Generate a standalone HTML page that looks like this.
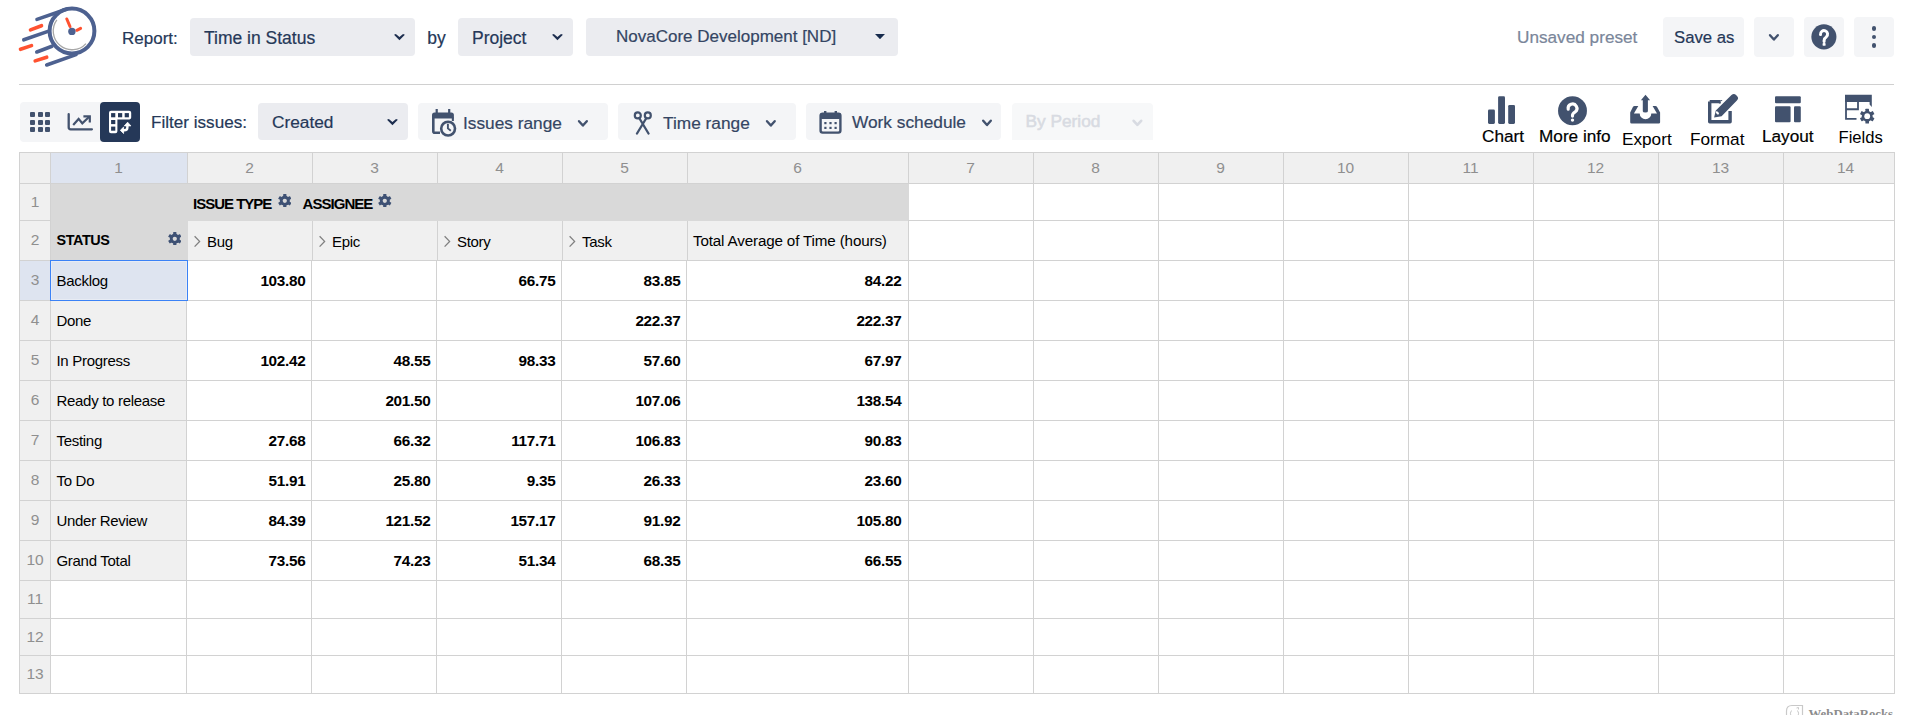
<!DOCTYPE html><html><head><meta charset='utf-8'><style>
*{box-sizing:border-box;margin:0;padding:0}
html,body{width:1913px;height:715px;overflow:hidden;background:#fff}
body{position:relative;font-family:"Liberation Sans",sans-serif;color:#253858}
.a{position:absolute}
.t{position:absolute;white-space:nowrap;line-height:1}
.tb{-webkit-text-stroke:0.2px currentColor}
.sel{position:absolute;background:#ebecf0;border-radius:4px}
.btn{position:absolute;background:#f4f5f7;border-radius:4px}
.g{position:absolute;background:#d2d2d2}
.gt{position:absolute;white-space:nowrap;line-height:1;font-size:14.5px;color:#000}
.num{position:absolute;white-space:nowrap;line-height:1;font-size:14.5px;font-weight:bold;color:#000;text-align:right}
.hd{position:absolute;white-space:nowrap;line-height:1;font-size:15px;color:#999;text-align:center}
</style></head><body>
<svg class="a" style="left:0;top:0" width="110" height="80" viewBox="0 0 110 80">
<g stroke="#4d6190" stroke-width="3.6" stroke-linecap="round" fill="none">
<circle cx="72" cy="31" r="22.4" stroke-width="4"/>
<line x1="37" y1="19.4" x2="67" y2="9"/>
<line x1="23.8" y1="39.8" x2="48" y2="31.4"/>
<line x1="36.8" y1="52" x2="52" y2="46.2"/>
<line x1="46.7" y1="65" x2="76" y2="54.6"/>
</g>
<g stroke="#ff5230" stroke-width="3.6" stroke-linecap="round" fill="none">
<line x1="30.5" y1="29.9" x2="41.5" y2="25.7"/>
<line x1="20.5" y1="49.3" x2="31.5" y2="45.6"/>
<line x1="35.2" y1="60.9" x2="46.7" y2="57.2"/>
<line x1="66.8" y1="19" x2="70" y2="26.5" stroke-width="3"/>
<line x1="76.8" y1="30.3" x2="80.6" y2="28.4" stroke-width="3"/>
</g>
<path d="M56.85 19.9 A18.8 18.8 0 0 0 85.97 43.6" stroke="#a8a8a8" stroke-width="1.3" fill="none"/>
<circle cx="71.9" cy="31.4" r="3.7" fill="#4d6190"/>
</svg>
<div class="t tb" style="left:122px;top:29.5px;font-size:17px;color:#253858">Report:</div>
<div class="sel" style="left:190px;top:18px;width:225px;height:38px"></div>
<div class="t tb" style="left:204px;top:29.6px;font-size:17.5px;color:#253858">Time in Status</div>
<svg class="a" style="left:394.1px;top:33.8px;overflow:visible" width="10.9" height="6.2" viewBox="0 0 10.9 6.2"><path d="M0 0.7 L1.85 0 L5.45 2.90 L9.05 0 L10.9 0.7 L5.45 6.2 Z" fill="#1d2e4f"/></svg>
<div class="t tb" style="left:427.2px;top:29.5px;font-size:17.5px;color:#253858">by</div>
<div class="sel" style="left:458px;top:18px;width:115px;height:38px"></div>
<div class="t tb" style="left:472px;top:29.5px;font-size:17.5px;color:#253858">Project</div>
<svg class="a" style="left:552px;top:33.8px;overflow:visible" width="10.9" height="6.2" viewBox="0 0 10.9 6.2"><path d="M0 0.7 L1.85 0 L5.45 2.90 L9.05 0 L10.9 0.7 L5.45 6.2 Z" fill="#1d2e4f"/></svg>
<div class="sel" style="left:586px;top:18px;width:312px;height:38px"></div>
<div class="t tb" style="left:616px;top:28px;font-size:17px;color:#344563">NovaCore Development [ND]</div>
<svg class="a" style="left:875px;top:33.8px" width="10" height="5.2" viewBox="0 0 10 5.2"><path d="M0 0 L10 0 L5 5.2 Z" fill="#172b4d"/></svg>
<div class="t tb" style="left:1517px;top:29px;font-size:17.2px;color:#7a869a">Unsaved preset</div>
<div class="btn" style="left:1663px;top:17px;width:81px;height:40px"></div>
<div class="t tb" style="left:1674px;top:30px;font-size:16.7px;color:#253858">Save as</div>
<div class="btn" style="left:1754px;top:17px;width:40px;height:40px"></div>
<svg class="a" style="left:0;top:0;overflow:visible" width="1" height="1"><path d="M1770.00 35.20 L1773.90 39.50 L1777.80 35.20" stroke="#42526e" stroke-width="2.4" fill="none" stroke-linecap="round" stroke-linejoin="round"/></svg>
<div class="btn" style="left:1804px;top:17px;width:40px;height:40px"></div>
<svg class="a" style="left:1811px;top:24px" width="26" height="26" viewBox="0 0 26 26"><circle cx="12.9" cy="12.85" r="12.55" fill="#42526e"/>
<path d="M9.5 10.6 A3.55 3.55 0 1 1 15.3 12.9 Q13.1 14.3 13.1 16.4 V17.6" stroke="#fff" stroke-width="3" fill="none" stroke-linecap="round"/>
<rect x="11.6" y="18.9" width="3" height="2.9" rx="0.9" fill="#fff"/></svg>
<div class="btn" style="left:1854px;top:17px;width:40px;height:40px"></div>
<div class="a" style="left:1871.5px;top:25.8px;width:4.8px;height:4.8px;border-radius:50%;background:#42526e"></div>
<div class="a" style="left:1871.5px;top:34.5px;width:4.8px;height:4.8px;border-radius:50%;background:#42526e"></div>
<div class="a" style="left:1871.5px;top:43.2px;width:4.8px;height:4.8px;border-radius:50%;background:#42526e"></div>
<div class="a" style="left:19px;top:84px;width:1875px;height:1px;background:#d0d0d0"></div>
<div class="btn" style="left:20px;top:102px;width:120px;height:40px;border-radius:4px"></div>
<div class="a" style="left:100px;top:102px;width:40px;height:40px;border-radius:4px;background:#253858"></div>
<div class="a" style="left:30.0px;top:112.0px;width:5px;height:5px;border-radius:1px;background:#42526e"></div>
<div class="a" style="left:37.6px;top:112.0px;width:5px;height:5px;border-radius:1px;background:#42526e"></div>
<div class="a" style="left:45.2px;top:112.0px;width:5px;height:5px;border-radius:1px;background:#42526e"></div>
<div class="a" style="left:30.0px;top:119.6px;width:5px;height:5px;border-radius:1px;background:#42526e"></div>
<div class="a" style="left:37.6px;top:119.6px;width:5px;height:5px;border-radius:1px;background:#42526e"></div>
<div class="a" style="left:45.2px;top:119.6px;width:5px;height:5px;border-radius:1px;background:#42526e"></div>
<div class="a" style="left:30.0px;top:127.2px;width:5px;height:5px;border-radius:1px;background:#42526e"></div>
<div class="a" style="left:37.6px;top:127.2px;width:5px;height:5px;border-radius:1px;background:#42526e"></div>
<div class="a" style="left:45.2px;top:127.2px;width:5px;height:5px;border-radius:1px;background:#42526e"></div>
<svg class="a" style="left:66px;top:112px" width="28" height="20" viewBox="0 0 28 20">
<path d="M2.7 2.2 V15.3 Q2.7 17.3 4.7 17.3 H25.9" stroke="#42526e" stroke-width="2.3" fill="none" stroke-linecap="round"/>
<path d="M7.2 12.9 L12.6 6.9 L16.3 11.3 L23.2 4.8" stroke="#42526e" stroke-width="2.2" fill="none"/>
<path d="M17.4 4.4 H23.8 V10.5" stroke="#42526e" stroke-width="2.2" fill="none"/>
</svg>
<svg class="a" style="left:102px;top:104px" width="36" height="36" viewBox="0 0 36 36">
<path d="M9 6.8 H27.2 Q29.2 6.8 29.2 8.8 V13.6 Q29.2 15.4 27.4 15.4 H15.4 V27.2 Q15.4 29.2 13.4 29.2 H9 Q7 29.2 7 27.2 V8.8 Q7 6.8 9 6.8 Z" fill="#fff"/>
<g fill="#253858">
<rect x="9.1" y="9.1" width="4.2" height="4.2"/><rect x="16" y="9.1" width="4.2" height="4.2"/><rect x="22.7" y="9.1" width="4.2" height="4.2"/>
<rect x="9.1" y="16" width="4.2" height="4.1"/><rect x="9.1" y="22.6" width="4.2" height="4.1"/>
</g>
<path d="M25.4 21 V23.2 Q25.4 26.3 22.3 26.3 H20.5" stroke="#fff" stroke-width="2.4" fill="none"/>
<path d="M25.6 18.2 L28.9 21.9 L22.3 21.9 Z" fill="#fff" stroke="#fff" stroke-width="0.8" stroke-linejoin="round"/>
<path d="M18.3 26.3 L21.6 23.1 L21.6 29.5 Z" fill="#fff" stroke="#fff" stroke-width="0.8" stroke-linejoin="round"/>
</svg>
<div class="t tb" style="left:151px;top:114px;font-size:17.1px;color:#253858">Filter issues:</div>
<div class="sel" style="left:258px;top:103px;width:150px;height:37px"></div>
<div class="t tb" style="left:272px;top:114px;font-size:17.3px;color:#253858">Created</div>
<svg class="a" style="left:387px;top:118.7px;overflow:visible" width="10.9" height="6.2" viewBox="0 0 10.9 6.2"><path d="M0 0.7 L1.85 0 L5.45 2.90 L9.05 0 L10.9 0.7 L5.45 6.2 Z" fill="#1d2e4f"/></svg>
<div class="btn" style="left:418px;top:103px;width:190px;height:37px"></div>
<svg class="a" style="left:431px;top:108px" width="27" height="30" viewBox="0 0 27 30">
<path d="M3.5 4.6 H20.4 Q22.9 4.6 22.9 7.1 V10.4 H1 V7.1 Q1 4.6 3.5 4.6 Z" fill="#42526e"/>
<rect x="4.6" y="1" width="2.2" height="4" fill="#42526e"/>
<rect x="17.1" y="1" width="2.2" height="4" fill="#42526e"/>
<path d="M2.3 9.5 V23.2 Q2.3 24.7 3.8 24.7 H9" stroke="#42526e" stroke-width="2.6" fill="none"/>
<path d="M21.85 9.5 V13" stroke="#42526e" stroke-width="2.1" fill="none"/>
<circle cx="17.1" cy="20.6" r="7.4" fill="#f4f5f7"/>
<circle cx="17.1" cy="20.6" r="6.9" fill="none" stroke="#42526e" stroke-width="2.6"/>
<path d="M16.9 15.8 V20.4 L19.8 22.8" stroke="#42526e" stroke-width="1.9" fill="none"/>
</svg>
<div class="t tb" style="left:463px;top:115px;font-size:17.3px;color:#344563">Issues range</div>
<svg class="a" style="left:0;top:0;overflow:visible" width="1" height="1"><path d="M579.00 121.20 L582.90 125.50 L586.80 121.20" stroke="#42526e" stroke-width="2.4" fill="none" stroke-linecap="round" stroke-linejoin="round"/></svg>
<div class="btn" style="left:618px;top:103px;width:178px;height:37px"></div>
<svg class="a" style="left:633px;top:111px" width="20" height="24" viewBox="0 0 20 24">
<circle cx="4.8" cy="4.4" r="3" stroke="#42526e" stroke-width="2.2" fill="none"/>
<circle cx="14.8" cy="4.4" r="3" stroke="#42526e" stroke-width="2.2" fill="none"/>
<path d="M6.2 7 L15.5 22.5 M13.4 7 L4 22.5" stroke="#42526e" stroke-width="2.3" stroke-linecap="round" fill="none"/>
</svg>
<div class="t tb" style="left:663px;top:115px;font-size:17.3px;color:#344563">Time range</div>
<svg class="a" style="left:0;top:0;overflow:visible" width="1" height="1"><path d="M767.00 121.20 L770.85 125.50 L774.70 121.20" stroke="#42526e" stroke-width="2.4" fill="none" stroke-linecap="round" stroke-linejoin="round"/></svg>
<div class="btn" style="left:806px;top:103px;width:195px;height:37px"></div>
<svg class="a" style="left:819px;top:110px" width="24" height="24" viewBox="0 0 24 24">
<rect x="1.6" y="3.6" width="19.8" height="19" rx="2" stroke="#42526e" stroke-width="2.4" fill="none"/>
<rect x="1" y="3" width="21" height="6" rx="2" fill="#42526e"/>
<rect x="5" y="1" width="2.4" height="4" fill="#42526e"/>
<rect x="15.6" y="1" width="2.4" height="4" fill="#42526e"/>
<g fill="#42526e"><rect x="5.3" y="12" width="2.2" height="2.2"/><rect x="10.4" y="12" width="2.2" height="2.2"/><rect x="15.5" y="12" width="2.2" height="2.2"/>
<rect x="5.3" y="16.8" width="2.2" height="2.2"/><rect x="10.4" y="16.8" width="2.2" height="2.2"/><rect x="15.5" y="16.8" width="2.2" height="2.2"/></g>
</svg>
<div class="t tb" style="left:852px;top:114px;font-size:17.3px;color:#344563">Work schedule</div>
<svg class="a" style="left:0;top:0;overflow:visible" width="1" height="1"><path d="M983.20 120.70 L987.00 125.00 L990.80 120.70" stroke="#42526e" stroke-width="2.4" fill="none" stroke-linecap="round" stroke-linejoin="round"/></svg>
<div class="a" style="left:1012px;top:103px;width:141px;height:37px;background:#f7f8f9;border-radius:4px 4px 0 0"></div>
<div class="t tb" style="left:1025.5px;top:113.4px;font-size:17.3px;color:#d8dbe2;-webkit-text-stroke:0.55px #d8dbe2">By Period</div>
<svg class="a" style="left:0;top:0;overflow:visible" width="1" height="1"><path d="M1133.65 120.85 L1137.40 124.85 L1141.15 120.85" stroke="#d8dbe2" stroke-width="2.7" fill="none" stroke-linecap="round" stroke-linejoin="round"/></svg>
<svg class="a" style="left:1487px;top:96px" width="30" height="29" viewBox="0 0 30 29">
<rect x="1" y="13.4" width="6.9" height="14.5" rx="1.3" fill="#42526e"/>
<rect x="11.1" y="0.3" width="6.9" height="27.6" rx="1.3" fill="#42526e"/>
<rect x="21.2" y="9" width="6.8" height="18.9" rx="1.3" fill="#42526e"/>
</svg>
<div class="t tb" style="left:1482px;top:128px;font-size:17.2px;color:#000">Chart</div>
<svg class="a" style="left:1557px;top:96px" width="31" height="31" viewBox="0 0 31 31"><circle cx="15.5" cy="14.7" r="14.45" fill="#42526e"/>
<path d="M11.2 13.2 A4.4 4.4 0 1 1 18.3 15.8 Q15.5 17.3 15.5 19.3 V20.1" stroke="#fff" stroke-width="3.1" fill="none" stroke-linecap="round"/>
<circle cx="15.5" cy="24.1" r="1.7" fill="#fff"/></svg>
<div class="t tb" style="left:1539px;top:128px;font-size:17.2px;color:#000">More info</div>
<svg class="a" style="left:1628px;top:94px" width="34" height="32" viewBox="0 0 34 32">
<path d="M17.5 0.8 L22.1 6.2 H19.9 V17.2 Q19.9 18.6 17.35 18.6 Q14.8 18.6 14.8 17.2 V6.2 H12.9 Z" fill="#42526e"/>
<path d="M6.6 12 Q5.5 12 4.9 12.9 L2.2 18.6 V28.2 Q2.2 29.6 3.6 29.6 H30.7 Q32.1 29.6 32.1 28.2 V18.6 L29.1 12.9 Q28.5 12 27.4 12 H24.6 L29 19.4 H23.3 A5.8 5.8 0 0 1 11.7 19.4 H5.9 L10.3 12 Z" fill="#42526e"/>
</svg>
<div class="t" style="left:1622px;top:130.5px;font-size:17.2px;color:#000">Export</div>
<svg class="a" style="left:1706px;top:94px" width="34" height="32" viewBox="0 0 34 32">
<path d="M3.7 7.6 H14.6 M3.7 7.6 V27.8 H24.1 V17" stroke="#42526e" stroke-width="3.4" fill="none" stroke-linejoin="round"/>
<path d="M14.6 5.9 L16.6 5.9 L12.6 9.4 L14.6 9.4 Z" fill="#42526e"/>
<path d="M8.1 23.5 L9.8 16.4 L25.5 1.1 Q27.9 -1 30.3 1.3 L31.2 2.3 Q33.1 4.3 30.9 6.4 L15.6 22.2 Z" fill="#42526e"/>
<ellipse cx="11.4" cy="18.9" rx="1.1" ry="1.9" transform="rotate(-45 11.4 18.9)" fill="#fff"/>
</svg>
<div class="t" style="left:1690px;top:130.5px;font-size:17.2px;color:#000">Format</div>
<svg class="a" style="left:1770px;top:90px" width="36" height="36" viewBox="0 0 36 36">
<rect x="5" y="6.2" width="25.8" height="7.1" rx="1.1" fill="#42526e"/>
<rect x="5" y="16.3" width="15.6" height="16" rx="1.1" fill="#42526e"/>
<rect x="24" y="16.3" width="6.8" height="16" rx="1.1" fill="#42526e"/>
</svg>
<div class="t tb" style="left:1762px;top:128px;font-size:17.2px;color:#000">Layout</div>
<svg class="a" style="left:1840px;top:90px" width="40" height="36" viewBox="0 0 40 36">
<path d="M5 4.8 H31.8 V17 L29.6 14.4 V11.9 H5 Z" fill="#42526e"/>
<path d="M6 11.9 V28.9 H16.5 M6 19.25 H18 V11.9" stroke="#42526e" stroke-width="1.8" fill="none"/>
<g transform="translate(27.2,26.2)"><circle r="5.4" fill="#42526e"/>
<g fill="#42526e"><rect x="-1.8" y="-7.4" width="3.6" height="14.8" rx="0.5"/><rect x="-1.8" y="-7.4" width="3.6" height="14.8" rx="0.5" transform="rotate(60)"/><rect x="-1.8" y="-7.4" width="3.6" height="14.8" rx="0.5" transform="rotate(120)"/></g>
<circle r="2.9" fill="#fff"/></g>
</svg>
<div class="t" style="left:1838.5px;top:130px;font-size:16.6px;color:#000">Fields</div>
<div class="a" style="left:19px;top:152px;width:1875px;height:31px;background:#f0f0f0"></div>
<div class="a" style="left:19px;top:152px;width:31px;height:541px;background:#f0f0f0"></div>
<div class="a" style="left:50px;top:152px;width:137px;height:31px;background:#dee4f0"></div>
<div class="a" style="left:19px;top:260px;width:31px;height:40px;background:#dee4f0"></div>
<div class="a" style="left:50px;top:260px;width:137px;height:320px;background:#f0f0f0"></div>
<div class="a" style="left:50px;top:183px;width:859px;height:38px;background:#d9d9d9"></div>
<div class="a" style="left:50px;top:183px;width:138px;height:77px;background:#d9d9d9"></div>
<div class="a" style="left:188px;top:221px;width:720px;height:39px;background:#f0f0f0"></div>
<div class="g" style="left:19px;top:152px;width:1876px;height:1px"></div>
<div class="g" style="left:19px;top:183px;width:1876px;height:1px"></div>
<div class="g" style="left:19px;top:220px;width:31px;height:1px"></div>
<div class="g" style="left:909px;top:220px;width:986px;height:1px"></div>
<div class="g" style="left:19px;top:260px;width:1876px;height:1px"></div>
<div class="g" style="left:19px;top:300px;width:1876px;height:1px"></div>
<div class="g" style="left:19px;top:340px;width:1876px;height:1px"></div>
<div class="g" style="left:19px;top:380px;width:1876px;height:1px"></div>
<div class="g" style="left:19px;top:420px;width:1876px;height:1px"></div>
<div class="g" style="left:19px;top:460px;width:1876px;height:1px"></div>
<div class="g" style="left:19px;top:500px;width:1876px;height:1px"></div>
<div class="g" style="left:19px;top:540px;width:1876px;height:1px"></div>
<div class="g" style="left:19px;top:580px;width:1876px;height:1px"></div>
<div class="g" style="left:19px;top:618px;width:1876px;height:1px"></div>
<div class="g" style="left:19px;top:655px;width:1876px;height:1px"></div>
<div class="g" style="left:19px;top:693px;width:1876px;height:1px"></div>
<div class="g" style="left:19px;top:152px;width:1px;height:542px"></div>
<div class="g" style="left:50px;top:152px;width:1px;height:542px"></div>
<div class="g" style="left:187px;top:152px;width:1px;height:31px"></div>
<div class="g" style="left:186px;top:260px;width:1px;height:433px"></div>
<div class="g" style="left:312px;top:152px;width:1px;height:31px"></div>
<div class="g" style="left:312px;top:221px;width:1px;height:39px"></div>
<div class="g" style="left:311px;top:260px;width:1px;height:433px"></div>
<div class="g" style="left:437px;top:152px;width:1px;height:31px"></div>
<div class="g" style="left:437px;top:221px;width:1px;height:39px"></div>
<div class="g" style="left:436px;top:260px;width:1px;height:433px"></div>
<div class="g" style="left:562px;top:152px;width:1px;height:31px"></div>
<div class="g" style="left:562px;top:221px;width:1px;height:39px"></div>
<div class="g" style="left:561px;top:260px;width:1px;height:433px"></div>
<div class="g" style="left:687px;top:152px;width:1px;height:31px"></div>
<div class="g" style="left:687px;top:221px;width:1px;height:39px"></div>
<div class="g" style="left:686px;top:260px;width:1px;height:433px"></div>
<div class="g" style="left:908px;top:152px;width:1px;height:31px"></div>
<div class="g" style="left:908px;top:220px;width:1px;height:474px"></div>
<div class="g" style="left:1033px;top:152px;width:1px;height:542px"></div>
<div class="g" style="left:1158px;top:152px;width:1px;height:542px"></div>
<div class="g" style="left:1283px;top:152px;width:1px;height:542px"></div>
<div class="g" style="left:1408px;top:152px;width:1px;height:542px"></div>
<div class="g" style="left:1533px;top:152px;width:1px;height:542px"></div>
<div class="g" style="left:1658px;top:152px;width:1px;height:542px"></div>
<div class="g" style="left:1783px;top:152px;width:1px;height:542px"></div>
<div class="g" style="left:1894px;top:152px;width:1px;height:542px"></div>
<div class="a" style="left:50px;top:260px;width:138px;height:41px;border:1px solid #3b82f6;box-shadow:inset 0 0 0 1px #e8ecf4;background:#dee4f0"></div>
<div class="t" style="left:88.5px;top:159.88px;font-size:15.5px;color:#8f8f8f;font-weight:normal;width:60px;text-align:center">1</div>
<div class="t" style="left:219.5px;top:159.88px;font-size:15.5px;color:#8f8f8f;font-weight:normal;width:60px;text-align:center">2</div>
<div class="t" style="left:344.5px;top:159.88px;font-size:15.5px;color:#8f8f8f;font-weight:normal;width:60px;text-align:center">3</div>
<div class="t" style="left:469.5px;top:159.88px;font-size:15.5px;color:#8f8f8f;font-weight:normal;width:60px;text-align:center">4</div>
<div class="t" style="left:594.5px;top:159.88px;font-size:15.5px;color:#8f8f8f;font-weight:normal;width:60px;text-align:center">5</div>
<div class="t" style="left:767.5px;top:159.88px;font-size:15.5px;color:#8f8f8f;font-weight:normal;width:60px;text-align:center">6</div>
<div class="t" style="left:940.5px;top:159.88px;font-size:15.5px;color:#8f8f8f;font-weight:normal;width:60px;text-align:center">7</div>
<div class="t" style="left:1065.5px;top:159.88px;font-size:15.5px;color:#8f8f8f;font-weight:normal;width:60px;text-align:center">8</div>
<div class="t" style="left:1190.5px;top:159.88px;font-size:15.5px;color:#8f8f8f;font-weight:normal;width:60px;text-align:center">9</div>
<div class="t" style="left:1315.5px;top:159.88px;font-size:15.5px;color:#8f8f8f;font-weight:normal;width:60px;text-align:center">10</div>
<div class="t" style="left:1440.5px;top:159.88px;font-size:15.5px;color:#8f8f8f;font-weight:normal;width:60px;text-align:center">11</div>
<div class="t" style="left:1565.5px;top:159.88px;font-size:15.5px;color:#8f8f8f;font-weight:normal;width:60px;text-align:center">12</div>
<div class="t" style="left:1690.5px;top:159.88px;font-size:15.5px;color:#8f8f8f;font-weight:normal;width:60px;text-align:center">13</div>
<div class="t" style="left:1815.5px;top:159.88px;font-size:15.5px;color:#8f8f8f;font-weight:normal;width:60px;text-align:center">14</div>
<div class="t" style="left:19.5px;top:193.78px;font-size:15.5px;color:#8f8f8f;font-weight:normal;width:31px;text-align:center">1</div>
<div class="t" style="left:19.5px;top:232.28px;font-size:15.5px;color:#8f8f8f;font-weight:normal;width:31px;text-align:center">2</div>
<div class="t" style="left:19.5px;top:272.28px;font-size:15.5px;color:#8f8f8f;font-weight:normal;width:31px;text-align:center">3</div>
<div class="t" style="left:19.5px;top:312.28px;font-size:15.5px;color:#8f8f8f;font-weight:normal;width:31px;text-align:center">4</div>
<div class="t" style="left:19.5px;top:352.28px;font-size:15.5px;color:#8f8f8f;font-weight:normal;width:31px;text-align:center">5</div>
<div class="t" style="left:19.5px;top:392.28px;font-size:15.5px;color:#8f8f8f;font-weight:normal;width:31px;text-align:center">6</div>
<div class="t" style="left:19.5px;top:432.28px;font-size:15.5px;color:#8f8f8f;font-weight:normal;width:31px;text-align:center">7</div>
<div class="t" style="left:19.5px;top:472.28px;font-size:15.5px;color:#8f8f8f;font-weight:normal;width:31px;text-align:center">8</div>
<div class="t" style="left:19.5px;top:512.28px;font-size:15.5px;color:#8f8f8f;font-weight:normal;width:31px;text-align:center">9</div>
<div class="t" style="left:19.5px;top:552.28px;font-size:15.5px;color:#8f8f8f;font-weight:normal;width:31px;text-align:center">10</div>
<div class="t" style="left:19.5px;top:591.28px;font-size:15.5px;color:#8f8f8f;font-weight:normal;width:31px;text-align:center">11</div>
<div class="t" style="left:19.5px;top:628.78px;font-size:15.5px;color:#8f8f8f;font-weight:normal;width:31px;text-align:center">12</div>
<div class="t" style="left:19.5px;top:666.28px;font-size:15.5px;color:#8f8f8f;font-weight:normal;width:31px;text-align:center">13</div>
<div class="t" style="left:193px;top:196.10px;font-size:15px;color:#000;font-weight:bold;letter-spacing:-1.0px">ISSUE TYPE</div>
<svg class="a" style="left:277.70px;top:193.90px" width="13.6" height="13.6" viewBox="-8 -8 16 16"><g fill="#3e5174"><circle r="5.9"/><rect x="-1.9" y="-8" width="3.8" height="16" rx="0.7" transform="rotate(0)"/><rect x="-1.9" y="-8" width="3.8" height="16" rx="0.7" transform="rotate(60)"/><rect x="-1.9" y="-8" width="3.8" height="16" rx="0.7" transform="rotate(120)"/></g><circle r="2.5" fill="#d9d9d9"/></svg>
<div class="t" style="left:302.5px;top:196.10px;font-size:15px;color:#000;font-weight:bold;letter-spacing:-0.95px">ASSIGNEE</div>
<svg class="a" style="left:378.20px;top:193.90px" width="13.6" height="13.6" viewBox="-8 -8 16 16"><g fill="#3e5174"><circle r="5.9"/><rect x="-1.9" y="-8" width="3.8" height="16" rx="0.7" transform="rotate(0)"/><rect x="-1.9" y="-8" width="3.8" height="16" rx="0.7" transform="rotate(60)"/><rect x="-1.9" y="-8" width="3.8" height="16" rx="0.7" transform="rotate(120)"/></g><circle r="2.5" fill="#d9d9d9"/></svg>
<div class="t" style="left:56.5px;top:233.41px;font-size:14.4px;color:#000;font-weight:bold;letter-spacing:-0.4px">STATUS</div>
<svg class="a" style="left:167.80px;top:231.90px" width="13.6" height="13.6" viewBox="-8 -8 16 16"><g fill="#3e5174"><circle r="5.9"/><rect x="-1.9" y="-8" width="3.8" height="16" rx="0.7" transform="rotate(0)"/><rect x="-1.9" y="-8" width="3.8" height="16" rx="0.7" transform="rotate(60)"/><rect x="-1.9" y="-8" width="3.8" height="16" rx="0.7" transform="rotate(120)"/></g><circle r="2.5" fill="#d9d9d9"/></svg>
<svg class="a" style="left:193px;top:235px" width="9" height="13" viewBox="0 0 9 13"><path d="M1.6 1.2 L6.6 6.4 L1.6 11.6" stroke="#808080" stroke-width="1.3" fill="none"/></svg>
<div class="t" style="left:207px;top:233.60px;font-size:15px;color:#000;font-weight:normal;letter-spacing:-0.3px">Bug</div>
<svg class="a" style="left:318px;top:235px" width="9" height="13" viewBox="0 0 9 13"><path d="M1.6 1.2 L6.6 6.4 L1.6 11.6" stroke="#808080" stroke-width="1.3" fill="none"/></svg>
<div class="t" style="left:332px;top:233.60px;font-size:15px;color:#000;font-weight:normal;letter-spacing:-0.3px">Epic</div>
<svg class="a" style="left:443px;top:235px" width="9" height="13" viewBox="0 0 9 13"><path d="M1.6 1.2 L6.6 6.4 L1.6 11.6" stroke="#808080" stroke-width="1.3" fill="none"/></svg>
<div class="t" style="left:457px;top:233.60px;font-size:15px;color:#000;font-weight:normal;letter-spacing:-0.3px">Story</div>
<svg class="a" style="left:568px;top:235px" width="9" height="13" viewBox="0 0 9 13"><path d="M1.6 1.2 L6.6 6.4 L1.6 11.6" stroke="#808080" stroke-width="1.3" fill="none"/></svg>
<div class="t" style="left:582px;top:233.60px;font-size:15px;color:#000;font-weight:normal;letter-spacing:-0.3px">Task</div>
<div class="t" style="left:693px;top:233.43px;font-size:15.2px;color:#000;font-weight:normal;letter-spacing:-0.15px">Total Average of Time (hours)</div>
<div class="t" style="left:56.5px;top:273.30px;font-size:15px;color:#000;font-weight:normal;letter-spacing:-0.3px">Backlog</div>
<div class="t" style="left:162px;top:273.05px;font-size:15.3px;color:#000;font-weight:bold;letter-spacing:-0.3px;width:143.4px;text-align:right">103.80</div>
<div class="t" style="left:412px;top:273.05px;font-size:15.3px;color:#000;font-weight:bold;letter-spacing:-0.3px;width:143.4px;text-align:right">66.75</div>
<div class="t" style="left:537px;top:273.05px;font-size:15.3px;color:#000;font-weight:bold;letter-spacing:-0.3px;width:143.4px;text-align:right">83.85</div>
<div class="t" style="left:758px;top:273.05px;font-size:15.3px;color:#000;font-weight:bold;letter-spacing:-0.3px;width:143.4px;text-align:right">84.22</div>
<div class="t" style="left:56.5px;top:313.30px;font-size:15px;color:#000;font-weight:normal;letter-spacing:-0.3px">Done</div>
<div class="t" style="left:537px;top:313.05px;font-size:15.3px;color:#000;font-weight:bold;letter-spacing:-0.3px;width:143.4px;text-align:right">222.37</div>
<div class="t" style="left:758px;top:313.05px;font-size:15.3px;color:#000;font-weight:bold;letter-spacing:-0.3px;width:143.4px;text-align:right">222.37</div>
<div class="t" style="left:56.5px;top:353.30px;font-size:15px;color:#000;font-weight:normal;letter-spacing:-0.3px">In Progress</div>
<div class="t" style="left:162px;top:353.05px;font-size:15.3px;color:#000;font-weight:bold;letter-spacing:-0.3px;width:143.4px;text-align:right">102.42</div>
<div class="t" style="left:287px;top:353.05px;font-size:15.3px;color:#000;font-weight:bold;letter-spacing:-0.3px;width:143.4px;text-align:right">48.55</div>
<div class="t" style="left:412px;top:353.05px;font-size:15.3px;color:#000;font-weight:bold;letter-spacing:-0.3px;width:143.4px;text-align:right">98.33</div>
<div class="t" style="left:537px;top:353.05px;font-size:15.3px;color:#000;font-weight:bold;letter-spacing:-0.3px;width:143.4px;text-align:right">57.60</div>
<div class="t" style="left:758px;top:353.05px;font-size:15.3px;color:#000;font-weight:bold;letter-spacing:-0.3px;width:143.4px;text-align:right">67.97</div>
<div class="t" style="left:56.5px;top:393.30px;font-size:15px;color:#000;font-weight:normal;letter-spacing:-0.3px">Ready to release</div>
<div class="t" style="left:287px;top:393.05px;font-size:15.3px;color:#000;font-weight:bold;letter-spacing:-0.3px;width:143.4px;text-align:right">201.50</div>
<div class="t" style="left:537px;top:393.05px;font-size:15.3px;color:#000;font-weight:bold;letter-spacing:-0.3px;width:143.4px;text-align:right">107.06</div>
<div class="t" style="left:758px;top:393.05px;font-size:15.3px;color:#000;font-weight:bold;letter-spacing:-0.3px;width:143.4px;text-align:right">138.54</div>
<div class="t" style="left:56.5px;top:433.30px;font-size:15px;color:#000;font-weight:normal;letter-spacing:-0.3px">Testing</div>
<div class="t" style="left:162px;top:433.05px;font-size:15.3px;color:#000;font-weight:bold;letter-spacing:-0.3px;width:143.4px;text-align:right">27.68</div>
<div class="t" style="left:287px;top:433.05px;font-size:15.3px;color:#000;font-weight:bold;letter-spacing:-0.3px;width:143.4px;text-align:right">66.32</div>
<div class="t" style="left:412px;top:433.05px;font-size:15.3px;color:#000;font-weight:bold;letter-spacing:-0.3px;width:143.4px;text-align:right">117.71</div>
<div class="t" style="left:537px;top:433.05px;font-size:15.3px;color:#000;font-weight:bold;letter-spacing:-0.3px;width:143.4px;text-align:right">106.83</div>
<div class="t" style="left:758px;top:433.05px;font-size:15.3px;color:#000;font-weight:bold;letter-spacing:-0.3px;width:143.4px;text-align:right">90.83</div>
<div class="t" style="left:56.5px;top:473.30px;font-size:15px;color:#000;font-weight:normal;letter-spacing:-0.3px">To Do</div>
<div class="t" style="left:162px;top:473.05px;font-size:15.3px;color:#000;font-weight:bold;letter-spacing:-0.3px;width:143.4px;text-align:right">51.91</div>
<div class="t" style="left:287px;top:473.05px;font-size:15.3px;color:#000;font-weight:bold;letter-spacing:-0.3px;width:143.4px;text-align:right">25.80</div>
<div class="t" style="left:412px;top:473.05px;font-size:15.3px;color:#000;font-weight:bold;letter-spacing:-0.3px;width:143.4px;text-align:right">9.35</div>
<div class="t" style="left:537px;top:473.05px;font-size:15.3px;color:#000;font-weight:bold;letter-spacing:-0.3px;width:143.4px;text-align:right">26.33</div>
<div class="t" style="left:758px;top:473.05px;font-size:15.3px;color:#000;font-weight:bold;letter-spacing:-0.3px;width:143.4px;text-align:right">23.60</div>
<div class="t" style="left:56.5px;top:513.30px;font-size:15px;color:#000;font-weight:normal;letter-spacing:-0.3px">Under Review</div>
<div class="t" style="left:162px;top:513.05px;font-size:15.3px;color:#000;font-weight:bold;letter-spacing:-0.3px;width:143.4px;text-align:right">84.39</div>
<div class="t" style="left:287px;top:513.05px;font-size:15.3px;color:#000;font-weight:bold;letter-spacing:-0.3px;width:143.4px;text-align:right">121.52</div>
<div class="t" style="left:412px;top:513.05px;font-size:15.3px;color:#000;font-weight:bold;letter-spacing:-0.3px;width:143.4px;text-align:right">157.17</div>
<div class="t" style="left:537px;top:513.05px;font-size:15.3px;color:#000;font-weight:bold;letter-spacing:-0.3px;width:143.4px;text-align:right">91.92</div>
<div class="t" style="left:758px;top:513.05px;font-size:15.3px;color:#000;font-weight:bold;letter-spacing:-0.3px;width:143.4px;text-align:right">105.80</div>
<div class="t" style="left:56.5px;top:553.30px;font-size:15px;color:#000;font-weight:normal;letter-spacing:-0.3px">Grand Total</div>
<div class="t" style="left:162px;top:553.05px;font-size:15.3px;color:#000;font-weight:bold;letter-spacing:-0.3px;width:143.4px;text-align:right">73.56</div>
<div class="t" style="left:287px;top:553.05px;font-size:15.3px;color:#000;font-weight:bold;letter-spacing:-0.3px;width:143.4px;text-align:right">74.23</div>
<div class="t" style="left:412px;top:553.05px;font-size:15.3px;color:#000;font-weight:bold;letter-spacing:-0.3px;width:143.4px;text-align:right">51.34</div>
<div class="t" style="left:537px;top:553.05px;font-size:15.3px;color:#000;font-weight:bold;letter-spacing:-0.3px;width:143.4px;text-align:right">68.35</div>
<div class="t" style="left:758px;top:553.05px;font-size:15.3px;color:#000;font-weight:bold;letter-spacing:-0.3px;width:143.4px;text-align:right">66.55</div>
<div class="t" style="left:1808.5px;top:708.2px;font-size:12.8px;font-weight:bold;color:#8c8c8c;font-family:'Liberation Serif',serif;letter-spacing:0px">WebDataRocks</div>
<svg class="a" style="left:1785px;top:704px" width="19" height="14" viewBox="0 0 19 14"><path d="M1.5 14 V7 Q1.5 1.5 7 1.5 H17.5 V14" stroke="#c9c9c9" stroke-width="1.2" fill="none"/><path d="M6 12 Q4.5 9 6.5 6.5 M13 12 Q14.5 9 12.5 6.5 M11.5 4 L13.5 3.5 L13.5 5.5" stroke="#c9c9c9" stroke-width="1" fill="none"/></svg>
</body></html>
